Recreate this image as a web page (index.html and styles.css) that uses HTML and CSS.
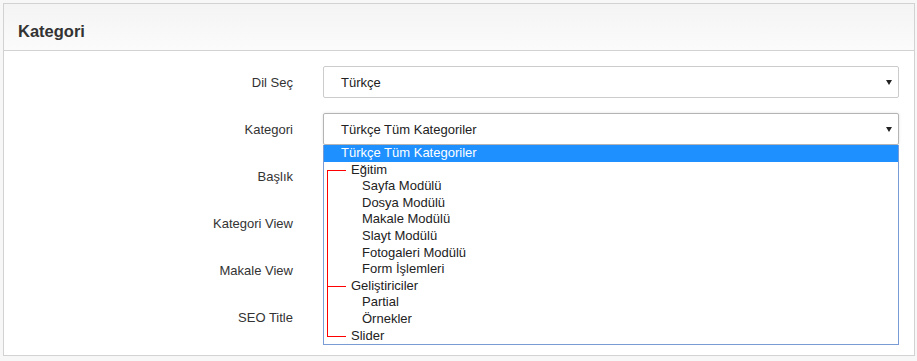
FILE: index.html
```html
<!DOCTYPE html>
<html lang="tr">
<head>
    <meta charset="UTF-8">
    <meta name="viewport" content="width=device-width, initial-scale=1.0">
    <title>Kategori</title>
    <link rel="stylesheet" href="styles.css">
</head>
<body>

    <div class="panel">
        <div class="panel-heading">
            <h3 class="panel-title">Kategori</h3>
        </div>
        <div class="panel-body">
            <div class="form-row">
                <label class="form-label">Dil Seç</label>
                <div class="select">
                    <span class="select-text">Türkçe</span>
                    <span class="caret"></span>
                </div>
            </div>

            <div class="form-row">
                <label class="form-label">Kategori</label>
                <div class="select select-open">
                    <span class="select-text">Türkçe Tüm Kategoriler</span>
                    <span class="caret"></span>

                    <!-- açık liste -->
                    <div class="dropdown">
                        <div class="option selected">Türkçe Tüm Kategoriler</div>
                        <div class="tree">
                            <div class="option level-1">Eğitim</div>
                            <div class="option level-2">Sayfa Modülü</div>
                            <div class="option level-2">Dosya Modülü</div>
                            <div class="option level-2">Makale Modülü</div>
                            <div class="option level-2">Slayt Modülü</div>
                            <div class="option level-2">Fotogaleri Modülü</div>
                            <div class="option level-2">Form İşlemleri</div>
                            <div class="option level-1">Geliştiriciler</div>
                            <div class="option level-2">Partial</div>
                            <div class="option level-2">Örnekler</div>
                            <div class="option level-1">Slider</div>
                        </div>
                    </div>
                </div>
            </div>

            <div class="form-row">
                <label class="form-label">Başlık</label>
                <input type="text" class="input-field">
            </div>

            <div class="form-row">
                <label class="form-label">Kategori View</label>
                <input type="text" class="input-field">
            </div>

            <div class="form-row">
                <label class="form-label">Makale View</label>
                <input type="text" class="input-field">
            </div>

            <div class="form-row">
                <label class="form-label">SEO Title</label>
                <input type="text" class="input-field">
            </div>
        </div>
    </div>

</body>
</html>
```

FILE: styles.css
```css
body {
    font-family: Arial, "Liberation Sans", sans-serif;
    font-size: 13px;
    color: #333;
    margin: 3px 2px 5px 3px;
    background-color: #f7f7f7;
}
.panel {
    background-color: white;
    border: 1px solid #d2d2d2;
    box-shadow: 0 1px 2px rgba(0, 0, 0, 0.08);
    height: 353px;
    box-sizing: border-box;
}
.panel-heading {
    height: 47px;
    box-sizing: border-box;
    padding: 17px 14px 9px;
    background: linear-gradient(to bottom, #f4f4f4, #fbfbfb);
    border-bottom: 1px solid #d2d2d2;
}
.panel-title {
    margin: 0;
    font-size: 16.5px;
    line-height: 20px;
    font-weight: bold;
    color: #333;
}
.panel-body {
    padding: 15px 15px 0 0;
    display: grid;
    gap: 15px;
}
.form-row {
    display: grid;
    grid-template-columns: 289px 1fr;
    column-gap: 30px;
    align-items: center;
}
.form-label {
    text-align: right;
}
.select,
.input-field {
    height: 32px;
    box-sizing: border-box;
    border: 1px solid #ccc;
    border-radius: 2px;
    background-color: white;
}
.input-field {
    width: 100%;
    margin: 0;
}
.select {
    position: relative;
    display: flex;
    align-items: center;
    justify-content: space-between;
    padding: 0 6px 0 17px;
    color: #222;
}
.select-open {
    border-color: #b4b4b4;
    box-shadow: 0 0 3px rgba(0, 0, 0, 0.12);
    z-index: 2;
}
.caret {
    width: 0;
    height: 0;
    border-left: 3px solid transparent;
    border-right: 3px solid transparent;
    border-top: 5px solid #222;
}
.dropdown {
    position: absolute;
    top: 100%;
    left: -1px;
    right: -1px;
    margin-top: 1px;
    background-color: white;
    border: 1px solid #7a9cd6;
    border-top: none;
}
.option {
    line-height: 16.6px;
    height: 16.6px;
    white-space: nowrap;
    color: #222;
}
.option.selected {
    background-color: #1e90ff;
    color: white;
    padding-left: 17px;
}
.tree {
    position: relative;
}
.tree::before {
    content: "";
    position: absolute;
    left: 3px;
    top: 8px;
    bottom: 8px;
    width: 1px;
    background-color: #ff0000;
}
.level-1 {
    position: relative;
    padding-left: 27px;
}
.level-1::before {
    content: "";
    position: absolute;
    left: 3px;
    top: 8px;
    width: 19px;
    height: 1px;
    background-color: #ff0000;
}
.level-2 {
    padding-left: 38px;
}
```
